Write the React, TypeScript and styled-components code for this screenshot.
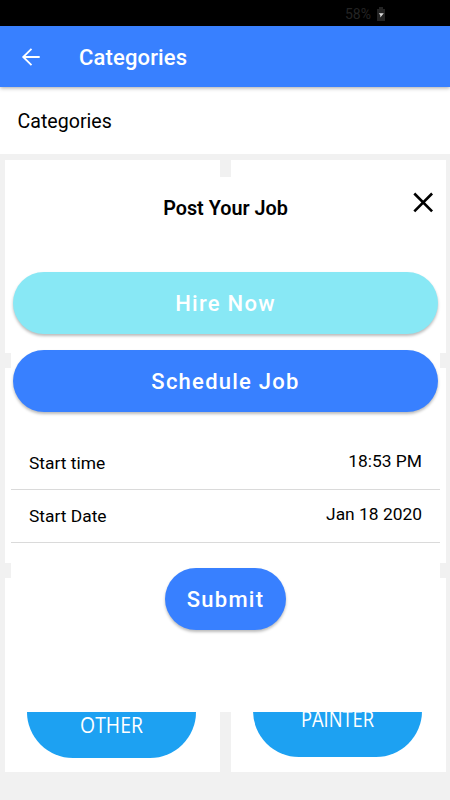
import React from "react";
import styled, { createGlobalStyle } from "styled-components";

const GlobalStyle = createGlobalStyle`
  * { box-sizing: border-box; }
  body { margin: 0; background: #f1f1f1; font-family: Roboto, "Liberation Sans", sans-serif; color: #000; }
  button { border: 0; margin: 0; padding: 0; font: inherit; background: none; }
`;

const Screen = styled.main`
  position: relative;
  width: 450px;
  height: 800px;
  overflow: hidden;
  background: #f1f1f1;
`;

const StatusBar = styled.div`
  display: flex;
  justify-content: flex-end;
  align-items: center;
  gap: 5px;
  height: 26px;
  padding: 2px 64px 0 0;
  background: #000;
  color: #242424;
  font-size: 14px;
`;

const AppBar = styled.header`
  position: relative;
  display: flex;
  align-items: center;
  height: 61px;
  padding-left: 19px;
  background: #3880ff;
  box-shadow: 0 1px 4px rgba(0, 0, 0, 0.35);
  color: #fff;
`;

const BackButton = styled.button`
  display: flex;
  width: 60px;
  color: #fff;
`;

const AppTitle = styled.h1`
  margin: 0;
  padding-top: 2px;
  font-size: 22px;
  font-weight: 500;
  line-height: 26px;
  letter-spacing: 0.15px;
`;

const SectionTitle = styled.h2`
  margin: 0;
  height: 67px;
  padding: 23px 0 0 17.5px;
  background: #fff;
  font-size: 19.6px;
  font-weight: 400;
  line-height: 24px;
`;

const CardGrid = styled.section`
  display: grid;
  grid-template-columns: 215px 215px;
  grid-template-rows: 193px 195px 194px;
  gap: 15px 11px;
  padding: 6px 5px 0;
`;

const Card = styled.article`
  display: flex;
  align-items: flex-end;
  justify-content: center;
  background: #fff;
`;

const CategoryPill = styled.div<{ $bottom: number; $textTop: number }>`
  width: 169px;
  height: 92px;
  margin: 0 2px ${(p) => p.$bottom}px 0;
  padding-top: ${(p) => p.$textTop}px;
  border-radius: 46px;
  background: #1da1f2;
  color: #fff;
  font-family: "Open Sans", "Noto Sans", sans-serif;
  font-size: 21.3px;
  line-height: 28px;
  text-align: center;
`;

const PillText = styled.span<{ $stretch: number }>`
  display: inline-block;
  transform: scaleX(${(p) => p.$stretch});
`;

const Dialog = styled.section`
  position: absolute;
  left: 11px;
  top: 177px;
  width: 429px;
  height: 535px;
  background: #fff;
`;

const DialogHeader = styled.div`
  display: grid;
  grid-template-columns: 34px 1fr 34px;
  align-items: start;
  height: 95px;
  padding-top: 14px;
`;

const DialogTitle = styled.h3`
  grid-column: 2;
  margin: 6px 0 0;
  font-size: 19.8px;
  font-weight: 600;
  line-height: 24px;
  text-align: center;
`;

const CloseButton = styled.button`
  display: flex;
  justify-content: center;
`;

const Actions = styled.div`
  display: flex;
  flex-direction: column;
  gap: 16.5px;
  padding: 0 2px;
`;

const PillButton = styled.button<{ $tone?: "cyan"; $compact?: boolean }>`
  width: ${(p) => (p.$compact ? "121px" : "100%")};
  height: 61.7px;
  padding-top: 1px;
  border-radius: 31px;
  background: ${(p) => (p.$tone === "cyan" ? "#88e8f5" : "#3880ff")};
  color: #fff;
  font-size: 22px;
  font-weight: 500;
  letter-spacing: 1.25px;
  box-shadow: 0 2px 3px rgba(0, 0, 0, 0.27);
`;

const Fields = styled.dl`
  margin: 25.1px 0 0;
`;

const Field = styled.div`
  display: flex;
  justify-content: space-between;
  height: 53px;
  padding: 14px 18px 0;
  border-bottom: 1px solid #dadada;
  font-size: 17.4px;
  line-height: 22px;
`;

const Label = styled.dt`
  padding-top: 1px;
`;

const Value = styled.dd`
  margin: -0.5px 0 0;
`;

const SubmitRow = styled.div`
  display: flex;
  justify-content: center;
  padding-top: 25px;
`;

const categories = [
  { name: "OTHER", bottom: 14, textTop: 45, stretch: 0.91 },
  { name: "PAINTER", bottom: 15, textTop: 40, stretch: 0.86 },
];

const fields = [
  { label: "Start time", value: "18:53 PM" },
  { label: "Start Date", value: "Jan 18 2020" },
];

const BatteryIcon = () => (
  <svg width="10" height="14" viewBox="0 0 10 14">
    <path d="M3 0h4v2h2v12H1V2h2z" fill="#242424" />
    <path d="M2.8 6.2h5L4.3 10.5V8.2" fill="#ddd" />
  </svg>
);

const BackIcon = () => (
  <svg width="24" height="24" viewBox="0 0 24 24" fill="none" stroke="currentColor" strokeWidth="1.8">
    <path d="M20.7 12H4M12.5 3.8 4.2 12l8.3 8.2" />
  </svg>
);

const CloseIcon = () => (
  <svg width="22" height="22" viewBox="0 0 22 22" fill="none" stroke="#000" strokeWidth="2.6">
    <path d="m2.3 2.5 17.8 17.8M20.1 2.5 2.3 20.3" />
  </svg>
);

export default function App() {
  return (
    <>
      <GlobalStyle />
      <Screen>
        <StatusBar>
          <span>58%</span>
          <BatteryIcon />
        </StatusBar>
        <AppBar>
          <BackButton aria-label="Back">
            <BackIcon />
          </BackButton>
          <AppTitle>Categories</AppTitle>
        </AppBar>
        <SectionTitle>Categories</SectionTitle>
        <CardGrid>
          <Card />
          <Card />
          <Card />
          <Card />
          {categories.map((c) => (
            <Card key={c.name}>
              <CategoryPill $bottom={c.bottom} $textTop={c.textTop}>
                <PillText $stretch={c.stretch}>{c.name}</PillText>
              </CategoryPill>
            </Card>
          ))}
        </CardGrid>
        <Dialog role="dialog">
          <DialogHeader>
            <DialogTitle>Post Your Job</DialogTitle>
            <CloseButton aria-label="Close">
              <CloseIcon />
            </CloseButton>
          </DialogHeader>
          <Actions>
            <PillButton $tone="cyan">Hire Now</PillButton>
            <PillButton>Schedule Job</PillButton>
          </Actions>
          <Fields>
            {fields.map((f) => (
              <Field key={f.label}>
                <Label>{f.label}</Label>
                <Value>{f.value}</Value>
              </Field>
            ))}
          </Fields>
          <SubmitRow>
            <PillButton $compact>Submit</PillButton>
          </SubmitRow>
        </Dialog>
      </Screen>
    </>
  );
}
